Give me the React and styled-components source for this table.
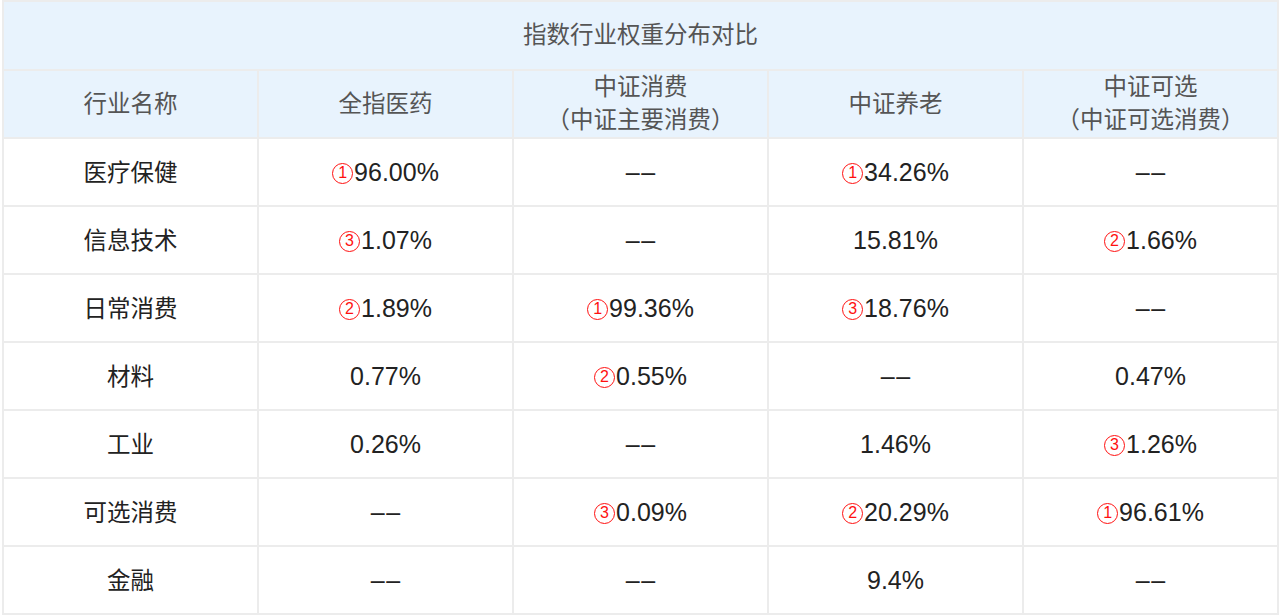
import React from "react";
import styled, { createGlobalStyle } from "styled-components";

const GlobalStyle = createGlobalStyle`
  html, body {
    margin: 0;
    padding: 0;
    background: #ffffff;
    font-family: "Noto Sans CJK SC", "Liberation Sans", sans-serif;
  }
`;

const Wrap = styled.div`
  padding: 0 2px 0 2px;
`;

const Table = styled.table`
  width: 1277px;
  border-collapse: collapse;
  table-layout: fixed;
  font-family: "Liberation Sans", "Noto Sans CJK SC", sans-serif;
`;

const Cell = styled.td`
  border: 2px solid #ececec;
  text-align: center;
  vertical-align: middle;
  padding: ${(props) => (props.head ? "0" : "2px 0 0")};
  height: ${(props) => props.h || (props.head ? 66 : 64)}px;
  font-size: 23.5px;
  line-height: ${(props) => (props.head ? 33 : 35)}px;
  color: ${(props) => (props.head ? "#555555" : "#222222")};
  background: ${(props) => (props.head ? "#e8f3fd" : "#ffffff")};
`;

const Num = styled.span`
  font-size: 25px;
`;

const Dash = styled.span`
  font-size: 25px;
  letter-spacing: 1.5px;
  margin-right: -1.5px;
`;

const Rank = styled.span`
  display: inline-block;
  box-sizing: border-box;
  width: 21px;
  height: 21px;
  border: 1.8px solid #ff1010;
  border-radius: 50%;
  color: #ff1010;
  font-family: "Liberation Sans", sans-serif;
  font-size: 16px;
  line-height: 17.4px;
  text-align: center;
  vertical-align: 3.5px;
  margin-right: 1px;
`;

const rows = [
  ["医疗保健", [1, "96.00%"], "--", [1, "34.26%"], "--"],
  ["信息技术", [3, "1.07%"], "--", "15.81%", [2, "1.66%"]],
  ["日常消费", [2, "1.89%"], [1, "99.36%"], [3, "18.76%"], "--"],
  ["材料", "0.77%", [2, "0.55%"], "--", "0.47%"],
  ["工业", "0.26%", "--", "1.46%", [3, "1.26%"]],
  ["可选消费", "--", [3, "0.09%"], [2, "20.29%"], [1, "96.61%"]],
  ["金融", "--", "--", "9.4%", "--"],
];

const Value = ({ v, first }) => {
  if (first) return v;
  if (Array.isArray(v)) {
    return (
      <>
        <Rank>{v[0]}</Rank>
        <Num>{v[1]}</Num>
      </>
    );
  }
  if (v === "--") return <Dash>––</Dash>;
  return <Num>{v}</Num>;
};

export default function App() {
  return (
    <Wrap>
      <GlobalStyle />
      <Table>
        <tbody>
          <tr>
            <Cell head colSpan={5} h={67}>
              指数行业权重分布对比
            </Cell>
          </tr>
          <tr>
            <Cell head>行业名称</Cell>
            <Cell head>全指医药</Cell>
            <Cell head>
              中证消费
              <br />
              （中证主要消费）
            </Cell>
            <Cell head>中证养老</Cell>
            <Cell head>
              中证可选
              <br />
              （中证可选消费）
            </Cell>
          </tr>
          {rows.map((r, i) => (
            <tr key={i}>
              {r.map((v, j) => (
                <Cell key={j}>
                  <Value v={v} first={j === 0} />
                </Cell>
              ))}
            </tr>
          ))}
        </tbody>
      </Table>
    </Wrap>
  );
}
